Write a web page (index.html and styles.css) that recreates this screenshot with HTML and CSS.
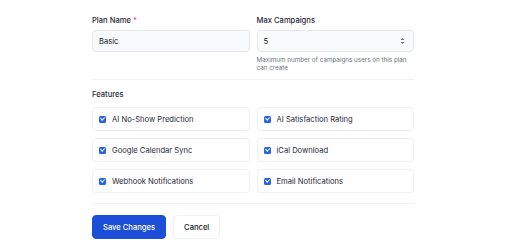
FILE: index.html
```html
<!DOCTYPE html>
<html>
<head>
  <title>Edit Plan</title>
  <meta name="viewport" content="width=device-width,initial-scale=1.0">
  <link rel="stylesheet" href="styles.css">
</head>
<body>
  <div class="plan-form">
    <div class="row">
      <div class="field">
        <label class="label">Plan Name <span class="req">*</span></label>
        <div class="input">Basic</div>
      </div>
      <div class="field">
        <label class="label">Max Campaigns</label>
        <div class="input number">
          <span>5</span>
          <svg class="spin" width="5" height="8" viewBox="0 0 5 8">
            <path d="M0.5 3 L2.5 1 L4.5 3 Z" fill="#6b7280"/>
            <path d="M0.5 5 L2.5 7 L4.5 5 Z" fill="#6b7280"/>
          </svg>
        </div>
        <p class="hint">Maximum number of campaigns users on this plan can create</p>
      </div>
    </div>

    <div class="divider"></div>

    <p class="section-title">Features</p>
    <div class="features">
      <div class="feature"><span class="check"></span>AI No-Show Prediction</div>
      <div class="feature"><span class="check"></span>AI Satisfaction Rating</div>
      <div class="feature"><span class="check"></span>Google Calendar Sync</div>
      <div class="feature"><span class="check"></span>iCal Download</div>
      <div class="feature"><span class="check"></span>Webhook Notifications</div>
      <div class="feature"><span class="check"></span>Email Notifications</div>
    </div>

    <div class="divider bottom"></div>

    <div class="actions">
      <button class="btn primary">Save Changes</button>
      <button class="btn">Cancel</button>
    </div>
  </div>
</body>
</html>
```

FILE: styles.css
```css
body{
  margin: 0;
  background-color: #fff;
  font-family: 'Inter', 'Liberation Sans', sans-serif;
  color: #111827;
}

.plan-form{
  width: 322px;
  margin: 0 auto;
  padding-top: 16px;
}

.row{
  display: grid;
  grid-template-columns: 1fr 1fr;
  column-gap: 7px;
}

.label{
  display: block;
  font-size: 7.6px;
  line-height: 10px;
  font-weight: 500;
  margin-bottom: 4px;
  color: #1f2937;
}
.req{
  color: #ef4444;
}

.input{
  height: 22px;
  box-sizing: border-box;
  background-color: #f9fafb;
  border: 1px solid #e5e7eb;
  border-radius: 4px;
  padding: 0 6px;
  font-size: 7.6px;
  display: flex;
  align-items: center;
  color: #111827;
}
.number{
  justify-content: space-between;
}
.spin{
  margin-right: 2px;
}

.hint{
  margin: 4px 0 0;
  font-size: 6.3px;
  line-height: 8px;
  color: #6b7280;
}

.divider{
  height: 1px;
  background-color: #f0f1f3;
  margin-top: 7px;
}

.section-title{
  margin: 10px 0 7px;
  font-size: 7.6px;
  line-height: 10px;
  font-weight: 500;
  color: #1f2937;
}

.features{
  display: grid;
  grid-template-columns: 1fr 1fr;
  gap: 7px;
}
.feature{
  height: 24px;
  box-sizing: border-box;
  border: 1px solid #eef0f2;
  border-radius: 4px;
  display: flex;
  align-items: center;
  padding-left: 6px;
  font-size: 7.6px;
  color: #1f2937;
}
.check{
  width: 7px;
  height: 7px;
  border-radius: 1.5px;
  background-color: #2563eb;
  margin-right: 6px;
  position: relative;
}
.check::after{
  content: "";
  position: absolute;
  left: 2.3px;
  top: 0.8px;
  width: 1.6px;
  height: 3.4px;
  border: solid #fff;
  border-width: 0 1px 1px 0;
  transform: rotate(45deg);
}

.divider.bottom{
  margin-top: 10px;
}

.actions{
  display: flex;
  gap: 7px;
  margin-top: 11px;
}
.btn{
  font-family: 'Inter', 'Liberation Sans', sans-serif;
  font-size: 7.6px;
  height: 24px;
  padding: 0 10px;
  border-radius: 4px;
  border: 1px solid #eef0f2;
  background-color: #fff;
  color: #111827;
  font-weight: 500;
}
.btn.primary{
  background-color: #1d4ed8;
  border-color: #1d4ed8;
  color: #fff;
}
```
